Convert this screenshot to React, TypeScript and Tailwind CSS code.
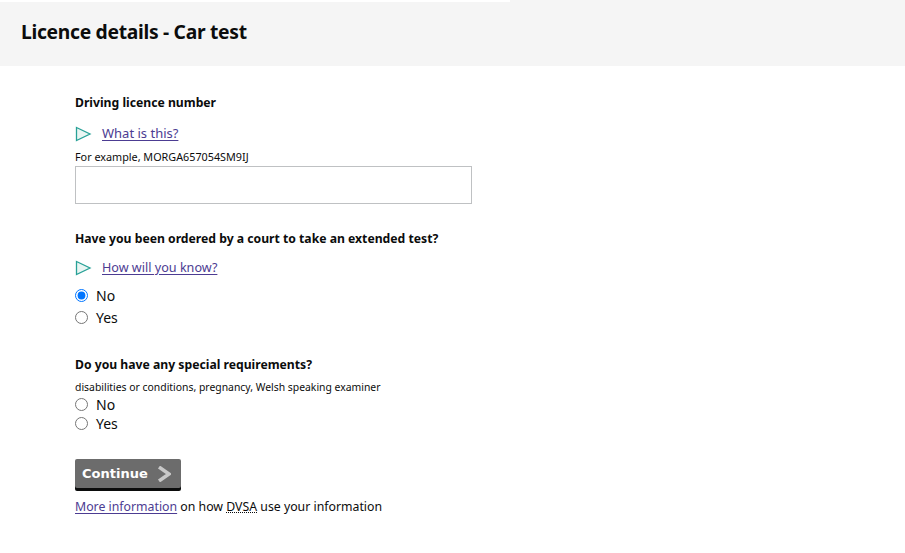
import React from "react";

function Tri() {
  return (
    <svg width="17" height="16" viewBox="0 0 17 16" className="shrink-0">
      <path d="M1.5 1.5 L15 8 L1.5 14.5 Z" fill="#eaf6f3" stroke="#28a197" strokeWidth="1.3" strokeLinejoin="miter" />
    </svg>
  );
}

function Radio({ checked, label }: { checked?: boolean; label: string }) {
  return (
    <label className="flex items-center h-[19px]">
      <input type="radio" defaultChecked={checked} className="m-0 w-[13px] h-[13px] accent-[#0075ff]" />
      <span className="ml-[8px] text-[14px] text-[#0b0c0c]">{label}</span>
    </label>
  );
}

export default function App() {
  return (
    <div className="w-[905px] h-[553px] bg-white overflow-hidden" style={{ fontFamily: '"Noto Sans", Arial, sans-serif' }}>
      <div className="flex h-[2px]">
        <div className="w-[510px] bg-white" />
        <div className="flex-1 bg-[#f5f5f5]" />
      </div>
      <div className="h-[64px] bg-[#f5f5f5] flex items-center pl-[21px] pb-[4px]">
        <h1 className="text-[19.3px] font-bold text-[#0b0c0c] tracking-[-0.3px]">Licence details - Car test</h1>
      </div>
      <div className="pl-[75px] pt-[28px]">
        <div className="text-[12.2px] font-bold text-[#0b0c0c] leading-[18px]">Driving licence number</div>
        <div className="flex items-center mt-[14px] h-[16px]">
          <Tri />
          <a href="#" className="ml-[10px] text-[13px] text-[#4c3c92] underline underline-offset-2">What is this?</a>
        </div>
        <div className="mt-[8px] text-[10.8px] text-[#0b0c0c] leading-[14px]">For example, MORGA657054SM9IJ</div>
        <input type="text" className="mt-[2px] w-[397px] h-[38px] border border-[#bfc1c3] outline-none block" />
        <div className="mt-[26px] text-[12.2px] font-bold text-[#0b0c0c] leading-[18px]">Have you been ordered by a court to take an extended test?</div>
        <div className="flex items-center mt-[12px] h-[16px]">
          <Tri />
          <a href="#" className="ml-[10px] text-[12.6px] text-[#4c3c92] underline underline-offset-2">How will you know?</a>
        </div>
        <div className="mt-[10px] flex flex-col gap-[3px]">
          <Radio checked label="No" />
          <Radio label="Yes" />
        </div>
        <div className="mt-[29px] text-[12.2px] font-bold text-[#0b0c0c] leading-[18px]">Do you have any special requirements?</div>
        <div className="mt-[6px] text-[10.4px] text-[#0b0c0c] leading-[14px]">disabilities or conditions, pregnancy, Welsh speaking examiner</div>
        <div className="mt-[1px] flex flex-col">
          <Radio label="No" />
          <Radio label="Yes" />
        </div>
        <button
          className="mt-[26px] w-[106px] h-[29px] bg-[#6c6c6c] rounded-[2px] shadow-[0_3px_0_#0b0c0c] flex items-center pl-[7px] text-white font-bold text-[13px]"
          style={{ fontFamily: '"DejaVu Sans", Verdana, sans-serif' }}
        >
          Continue
          <svg width="14" height="16" viewBox="0 0 14 16" className="ml-[9px]">
            <path d="M2 1 L12 8 L2 15" fill="none" stroke="#c8c8c8" strokeWidth="3.5" />
          </svg>
        </button>
        <div className="mt-[10px] text-[12.3px] text-[#0b0c0c]">
          <a href="#" className="text-[#4c3c92] underline underline-offset-2">More information</a> on how{" "}
          <abbr title="Driver and Vehicle Standards Agency" style={{ textDecoration: "underline dotted" }}>DVSA</abbr> use your information
        </div>
      </div>
    </div>
  );
}
